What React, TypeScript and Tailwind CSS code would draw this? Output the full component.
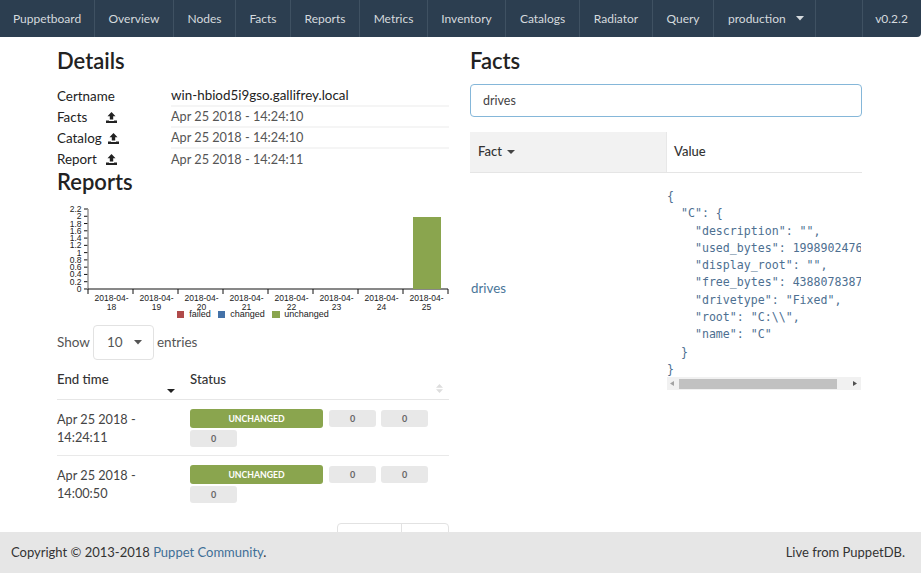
const navItems = [
  { label: "Puppetboard", w: "w-[95px]" },
  { label: "Overview", w: "w-[79px]" },
  { label: "Nodes", w: "w-[62px]" },
  { label: "Facts", w: "w-[55px]" },
  { label: "Reports", w: "w-[69px]" },
  { label: "Metrics", w: "w-[68px]" },
  { label: "Inventory", w: "w-[78px]" },
  { label: "Catalogs", w: "w-[74px]" },
  { label: "Radiator", w: "w-[73px]" },
  { label: "Query", w: "w-[61px]" },
];

const details = [
  { label: "Facts", gap: "ml-[18px]", value: "Apr 25 2018 - 14:24:10", line: true },
  { label: "Catalog", gap: "ml-[5px]", value: "Apr 25 2018 - 14:24:10", line: true },
  { label: "Report", gap: "ml-[8px]", value: "Apr 25 2018 - 14:24:11", line: false },
];

const factJson = `{
  "C": {
    "description": "",
    "used_bytes": 19989024768,
    "display_root": "",
    "free_bytes": 43880783872,
    "drivetype": "Fixed",
    "root": "C:\\\\",
    "name": "C"
  }
}`;

const UploadIcon = () => (
  <svg width="13" height="13" viewBox="0 0 13 13" className="text-[#222]">
    <path d="M6.5 1 L10.5 5.2 H8.2 V8.4 H4.8 V5.2 H2.5 Z" fill="currentColor" />
    <path d="M1 9.4 H4 V10 H9 V9.4 H12 V12 H1 Z" fill="currentColor" />
  </svg>
);

const Chart = () => {
  const yTicks = ["2.2", "2", "1.8", "1.6", "1.4", "1.2", "1", "0.8", "0.6", "0.4", "0.2", "0"];
  const days = ["18", "19", "20", "21", "22", "23", "24", "25"];
  return (
    <svg width="392" height="110" viewBox="0 0 392 110" className="block" fontFamily="'Liberation Sans', sans-serif" fontSize="8.5" fill="#222">
      {yTicks.map((t, i) => {
        const y = 5 + i * 7.27;
        return (
          <g key={t}>
            <line x1="27" x2="31" y1={y} y2={y} stroke="#111" />
            <text x="24.5" y={y + 3} textAnchor="end">{t}</text>
          </g>
        );
      })}
      <line x1="31" x2="31" y1="5" y2="85" stroke="#999" strokeWidth="1.5" />
      <line x1="31" x2="391" y1="85" y2="85" stroke="#111" />
      {days.map((d, i) => {
        const cx = 53.5 + i * 45;
        return (
          <g key={d}>
            <line x1={31 + i * 45} x2={31 + i * 45} y1="85" y2="90" stroke="#111" />
            <text x={cx + 1} y="97" textAnchor="middle">2018-04-</text>
            <text x={cx + 1} y="106" textAnchor="middle">{d}</text>
          </g>
        );
      })}
      <line x1="391" x2="391" y1="85" y2="90" stroke="#111" />
      <rect x="356" y="13" width="28" height="72" fill="#8aa54e" />
    </svg>
  );
};

const Legend = () => (
  <div className="flex justify-center h-[11px] -mt-[5px] items-center gap-[7.5px] text-[9px] leading-none text-[#222] font-['Liberation_Sans',sans-serif]">
    <span className="flex items-center gap-[5px]"><i className="w-[7px] h-[7px] bg-[#b04a4a]" />failed</span>
    <span className="flex items-center gap-[5px]"><i className="w-[7px] h-[7px] bg-[#4472a8]" />changed</span>
    <span className="flex items-center gap-[4px]"><i className="w-[8px] h-[7px] bg-[#8aa54e]" />unchanged</span>
  </div>
);

const ZeroBadge = () => (
  <span className="w-[47px] h-[17px] rounded-[3px] bg-[#e8e8e8] text-[#666] text-[9px] font-bold flex items-center justify-center">0</span>
);

const ReportRow = ({ date, time, line }: { date: string; time: string; line: boolean }) => (
  <div className={line ? "flex border-b border-[#e9e9e9] h-[56px]" : "flex h-[56px]"}>
    <div className="w-[133px] pt-[11px] text-[12.7px] leading-[17.5px] text-[#444]">
      <div>{date}</div>
      <div>{time}</div>
    </div>
    <div className="flex-1 pt-[9px] flex flex-wrap content-start gap-x-[5px] gap-y-[2px]">
      <span className="w-[133px] mr-[1px] h-[19px] rounded-[3px] bg-[#8aa54e] text-white text-[8.7px] font-bold flex items-center justify-center">UNCHANGED</span>
      <span className="mt-[1px]"><ZeroBadge /></span>
      <span className="mt-[1px]"><ZeroBadge /></span>
      <ZeroBadge />
    </div>
  </div>
);

export default function App() {
  return (
    <div className="h-[573px] w-[921px] overflow-hidden flex flex-col bg-white font-['Lato',sans-serif] text-[#222]">
      <nav className="h-[37px] shrink-0 bg-[#2c3e50] rounded-br-[4px] flex text-[12px] text-[#d5dade]">
        {navItems.map((item) => (
          <a key={item.label} className={`${item.w} border-r border-[#3f5162] flex items-center justify-center`}>
            {item.label}
          </a>
        ))}
        <a className="w-[102px] border-r border-[#3f5162] flex items-center pl-[14px]">
          production
          <svg width="8" height="5" viewBox="0 0 8 5" className="ml-[10px]"><path d="M0 0 H8 L4 4.5 Z" fill="#d5dade" /></svg>
        </a>
        <div className="w-[47px] border-r border-[#3f5162]" />
        <a className="flex-1 flex items-center justify-center pr-[1px]">v0.2.2</a>
      </nav>

      <main className="flex-1 overflow-hidden px-[57px] grid grid-cols-[392px_392px] gap-x-[21px] content-start">
        <section>
          <h2 className="font-semibold text-[22px] leading-[26px] mt-[11px] text-[#222]">Details</h2>
          <div className="mt-[12px] text-[13.4px]">
            <div className="flex h-[21px] items-center">
              <div className="w-[114px]">Certname</div>
              <div className="flex-1 h-full flex items-center border-b-2 border-[#f5f5f5]">win-hbiod5i9gso.gallifrey.local</div>
            </div>
            {details.map((row) => (
              <div key={row.label} className="flex h-[21px] items-center">
                <div className="w-[114px] flex items-center">
                  {row.label}
                  <span className={row.gap}><UploadIcon /></span>
                </div>
                <div className={row.line ? "flex-1 h-full flex items-center text-[12.7px] text-[#555] border-b-2 border-[#f5f5f5]" : "flex-1 h-full flex items-center text-[12.7px] text-[#555]"}>{row.value}</div>
              </div>
            ))}
          </div>
          <h2 className="font-semibold text-[22px] leading-[26px] text-[#222] -mt-[1px]">Reports</h2>
          <div className="mt-[9px]">
            <Chart />
            <Legend />
          </div>
          <div className="mt-[5px] flex items-center text-[13.5px] text-[#555]">
            Show
            <div className="ml-[3px] mr-[3px] w-[61px] h-[35px] border border-[#e2e2e2] rounded-[4px] flex items-center justify-between pl-[13px] pr-[11px]">
              <span>10</span>
              <svg width="8" height="5" viewBox="0 0 8 5"><path d="M0 0 H8 L4 4.5 Z" fill="#555" /></svg>
            </div>
            entries
          </div>
          <div className="h-[40px] flex border-b border-[#e6e6e6] relative text-[13.2px] font-medium text-[#333]">
            <div className="w-[133px] pt-[10px]">End time</div>
            <div className="flex-1 pt-[10px]">Status</div>
            <svg width="8" height="4" viewBox="0 0 8 4" className="absolute left-[110px] top-[29px]"><path d="M0 0 H8 L4 4 Z" fill="#222" /></svg>
            <svg width="7" height="9" viewBox="0 0 7 9" className="absolute right-[6px] top-[24px]"><path d="M0 3.7 L3.5 0 L7 3.7 Z M0 5.3 L3.5 9 L7 5.3 Z" fill="#ddd" /></svg>
          </div>
          <ReportRow date="Apr 25 2018 -" time="14:24:11" line />
          <ReportRow date="Apr 25 2018 -" time="14:00:50" line={false} />
          <div className="flex justify-end mt-[11px]">
            <div className="w-[112px] h-[30px] border border-[#e2e2e2] rounded-[4px] flex">
              <div className="w-[64px] border-r border-[#e2e2e2]" />
            </div>
          </div>
        </section>

        <section>
          <h2 className="font-semibold text-[22px] leading-[26px] mt-[11px] text-[#222]">Facts</h2>
          <input
            readOnly
            value="drives"
            className="mt-[10px] w-full h-[33px] border border-[#85b7d9] rounded-[4px] px-[12px] pb-[1px] text-[12.5px] text-[#444] outline-none"
          />
          <div className="mt-[15px] flex h-[41px] border-b border-[#e5e5e5] text-[13px] font-medium text-[#333]">
            <div className="w-[197px] bg-[#f2f2f2] border-r border-[#e8e8e8] flex items-center pl-[8px]">
              Fact
              <svg width="8" height="4" viewBox="0 0 8 4" className="ml-[5px]"><path d="M0 0 H8 L4 4 Z" fill="#444" /></svg>
            </div>
            <div className="flex-1 flex items-center pl-[7px]">Value</div>
          </div>
          <div className="flex items-center">
            <a className="w-[197px] pl-[1px] text-[13.3px] text-[#4a7699]">drives</a>
            <div className="w-[194px] pt-[15px] pb-[14px]">
              <pre className="overflow-hidden font-['DejaVu_Sans_Mono',monospace] text-[11.6px] leading-[17.3px] text-[#4d6f91]">{factJson}</pre>
              <div className="h-[13px] bg-[#f1f1f1] flex items-center mt-[-1px]">
                <svg width="12" height="13" viewBox="0 0 12 13"><path d="M7 4 L3 6.5 L7 9 Z" fill="#a3a3a3" /></svg>
                <div className="w-[158px] h-[10px] bg-[#c1c1c1]" />
                <div className="flex-1 flex justify-end">
                  <svg width="12" height="13" viewBox="0 0 12 13"><path d="M4 4 L8 6.5 L4 9 Z" fill="#505050" /></svg>
                </div>
              </div>
            </div>
          </div>
        </section>
      </main>

      <footer className="h-[41px] shrink-0 bg-[#e6e6e6] flex items-center justify-between pl-[11px] pr-[16px] text-[13px] text-[#333]">
        <div>
          Copyright © 2013-2018 <a className="text-[#3f6f96]">Puppet Community</a>.
        </div>
        <div>Live from PuppetDB.</div>
      </footer>
    </div>
  );
}
